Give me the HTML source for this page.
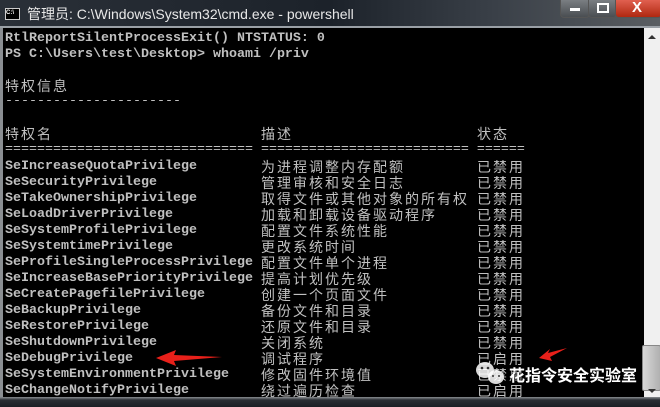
<!DOCTYPE html>
<html><head><meta charset="utf-8"><style>
*{margin:0;padding:0}
body{width:660px;height:407px;overflow:hidden;background:#000;position:relative;font-family:"Liberation Mono",monospace}
#tb{position:absolute;left:0;top:0;width:660px;height:27px;background:linear-gradient(90deg,#2a3038 0%,#1c222a 50%,#3a4048 75%,#5a5e62 100%)}
#tb .t{position:absolute;left:27px;top:4px;font:14px "Liberation Sans","Noto Sans CJK SC",sans-serif;color:#e8e8e8;white-space:nowrap}
#ico{position:absolute;left:5px;top:8px;width:13px;height:10px;background:#000;border:1px solid #ccc;font:bold 6px "Liberation Sans";color:#fff;line-height:9px}
.btn{position:absolute;top:0;height:17px;border:1px solid #555;border-top:none;border-radius:0 0 4px 4px;background:linear-gradient(#7a7e82,#4a4e52)}
#line{position:absolute;left:0;top:26px;width:660px;height:2px;background:#9aa0a6}
#con{position:absolute;left:0;top:28px;width:644px;height:369px;border-left:3px solid #8a8e92;box-sizing:border-box}
.r{position:absolute;left:5px;height:16px;margin-top:2px;white-space:pre;color:#c0c0c0;font:bold 13.33px/16px "Liberation Mono",monospace}
.c{position:absolute;height:16px;margin-top:2px;white-space:pre;color:#c0c0c0;font:14px/16px "Noto Sans CJK SC",sans-serif;letter-spacing:2px}
#sb{position:absolute;left:644px;top:28px;width:16px;height:369px;background:#f0f0f0}
#bot{position:absolute;left:0;top:397px;width:660px;height:10px;background:linear-gradient(#8a8e92,#2a2e34 30%,#1a1e24)}
</style></head><body>
<div id="tb"><div id="ico">C:\</div><div class="t">管理员: C:\Windows\System32\cmd.exe - powershell</div>
<div class="btn" style="left:560px;width:28px"><div style="position:absolute;left:9px;top:8px;width:10px;height:3px;background:#fff"></div></div>
<div class="btn" style="left:588px;width:27px"><div style="position:absolute;left:8px;top:3px;width:8px;height:6px;border:2px solid #fff"></div></div>
<div class="btn" style="left:615px;width:45px;background:linear-gradient(#e06050,#b02810)"><div style="position:absolute;left:16px;top:-1px;color:#fff;font:bold 15px 'Liberation Sans'">X</div></div>
</div>
<div id="line"></div>
<div id="con"></div>
<div id="sb"><div style="position:absolute;left:4px;top:7px;border:4px solid transparent;border-bottom:4px solid #333;border-top:none"></div>
<div style="position:absolute;left:-2px;top:317px;width:17px;height:44px;background:linear-gradient(90deg,#d8d8d8,#b0b0b0);border:1px solid #888;border-radius:2px"></div>
<div style="position:absolute;left:4px;top:361px;border:4px solid transparent;border-top:4px solid #333;border-bottom:none"></div></div>
<div id="bot"></div>

<div class="r" style="top:29px">RtlReportSilentProcessExit() NTSTATUS: 0</div>
<div class="r" style="top:45px">PS C:\Users\test\Desktop&gt; whoami /priv</div>
<div class="c" style="left:5px;top:76px">特权信息</div>
<div class="r" style="top:92px;font-weight:normal">----------------------</div>
<div class="c" style="left:5px;top:124px">特权名</div>
<div class="c" style="left:261px;top:124px">描述</div>
<div class="c" style="left:477px;top:124px">状态</div>
<div class="r" style="top:140px;font-weight:normal">=============================== ========================== ======</div>

<div class="r" style="top:157px">SeIncreaseQuotaPrivilege</div>
<div class="r" style="top:173px">SeSecurityPrivilege</div>
<div class="r" style="top:189px">SeTakeOwnershipPrivilege</div>
<div class="r" style="top:205px">SeLoadDriverPrivilege</div>
<div class="r" style="top:221px">SeSystemProfilePrivilege</div>
<div class="r" style="top:237px">SeSystemtimePrivilege</div>
<div class="r" style="top:253px">SeProfileSingleProcessPrivilege</div>
<div class="r" style="top:269px">SeIncreaseBasePriorityPrivilege</div>
<div class="r" style="top:285px">SeCreatePagefilePrivilege</div>
<div class="r" style="top:301px">SeBackupPrivilege</div>
<div class="r" style="top:317px">SeRestorePrivilege</div>
<div class="r" style="top:333px">SeShutdownPrivilege</div>
<div class="r" style="top:349px">SeDebugPrivilege</div>
<div class="r" style="top:365px">SeSystemEnvironmentPrivilege</div>
<div class="r" style="top:381px">SeChangeNotifyPrivilege</div>

<div class="c" style="left:261px;top:157px">为进程调整内存配额</div>
<div class="c" style="left:261px;top:173px">管理审核和安全日志</div>
<div class="c" style="left:261px;top:189px">取得文件或其他对象的所有权</div>
<div class="c" style="left:261px;top:205px">加载和卸载设备驱动程序</div>
<div class="c" style="left:261px;top:221px">配置文件系统性能</div>
<div class="c" style="left:261px;top:237px">更改系统时间</div>
<div class="c" style="left:261px;top:253px">配置文件单个进程</div>
<div class="c" style="left:261px;top:269px">提高计划优先级</div>
<div class="c" style="left:261px;top:285px">创建一个页面文件</div>
<div class="c" style="left:261px;top:301px">备份文件和目录</div>
<div class="c" style="left:261px;top:317px">还原文件和目录</div>
<div class="c" style="left:261px;top:333px">关闭系统</div>
<div class="c" style="left:261px;top:349px">调试程序</div>
<div class="c" style="left:261px;top:365px">修改固件环境值</div>
<div class="c" style="left:261px;top:381px">绕过遍历检查</div>

<div class="c" style="left:477px;top:157px">已禁用</div>
<div class="c" style="left:477px;top:173px">已禁用</div>
<div class="c" style="left:477px;top:189px">已禁用</div>
<div class="c" style="left:477px;top:205px">已禁用</div>
<div class="c" style="left:477px;top:221px">已禁用</div>
<div class="c" style="left:477px;top:237px">已禁用</div>
<div class="c" style="left:477px;top:253px">已禁用</div>
<div class="c" style="left:477px;top:269px">已禁用</div>
<div class="c" style="left:477px;top:285px">已禁用</div>
<div class="c" style="left:477px;top:301px">已禁用</div>
<div class="c" style="left:477px;top:317px">已禁用</div>
<div class="c" style="left:477px;top:333px">已禁用</div>
<div class="c" style="left:477px;top:349px">已启用</div>
<div class="c" style="left:477px;top:365px">已禁用</div>
<div class="c" style="left:477px;top:381px">已启用</div>

<svg style="position:absolute;left:0;top:0" width="660" height="407">
<path d="M156 358 L176 350 L174 355 L222 357 L174 361 L176 366 Z" fill="#e8201a"/>
<path d="M539 358 L550 349 L548 353 L567 348 L550 357 L552 361 Z" fill="#e8201a"/>
<ellipse cx="485" cy="370" rx="9" ry="8" fill="#fff" fill-opacity="0.85"/>
<ellipse cx="496" cy="377" rx="8" ry="7" fill="#fff" fill-opacity="0.85"/>
<circle cx="482" cy="368" r="1.3" fill="#333"/><circle cx="488" cy="368" r="1.3" fill="#333"/>
<circle cx="493" cy="376" r="1" fill="#333"/><circle cx="499" cy="376" r="1" fill="#333"/>
</svg>
<div style="position:absolute;left:509px;top:364px;color:#fff;font:bold 16px/20px 'Noto Sans CJK SC',sans-serif;text-shadow:0 0 2px #000">花指令安全实验室</div>
</body></html>
